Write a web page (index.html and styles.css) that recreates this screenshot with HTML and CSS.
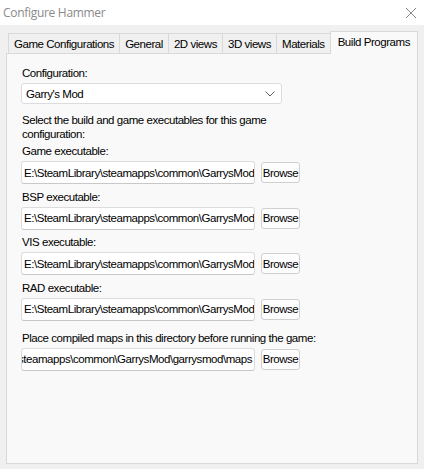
FILE: index.html
```html
<!DOCTYPE html>
<html>
<head>
<meta charset="utf-8">
<link rel="stylesheet" href="styles.css">
</head>
<body>
<div class="window">
  <div class="titlebar">
    <span class="title">Configure Hammer</span>
    <svg class="close" width="12" height="12" viewBox="0 0 12 12"><path d="M1 1 L11 11 M11 1 L1 11" stroke="#8a8a8a" stroke-width="1" fill="none"/></svg>
  </div>
  <div class="client">
    <div class="tabs">
      <div class="tab">Game Configurations</div>
      <div class="tab">General</div>
      <div class="tab">2D views</div>
      <div class="tab">3D views</div>
      <div class="tab">Materials</div>
      <div class="tab active">Build Programs</div>
    </div>
    <div class="panel">
      <div class="label">Configuration:</div>
      <div class="select">
        <span>Garry's Mod</span>
        <svg width="10" height="6" viewBox="0 0 10 6"><path d="M0.5 0.5 L5 5 L9.5 0.5" stroke="#606060" stroke-width="1" fill="none"/></svg>
      </div>
      <div class="desc">Select the build and game executables for this game configuration:</div>
      <div class="label tight">Game executable:</div>
      <div class="row"><div class="field">E:\SteamLibrary\steamapps\common\GarrysMod\hl2.exe</div><div class="btn">Browse</div></div>
      <div class="label">BSP executable:</div>
      <div class="row"><div class="field">E:\SteamLibrary\steamapps\common\GarrysMod\bin\vbsp.exe</div><div class="btn">Browse</div></div>
      <div class="label">VIS executable:</div>
      <div class="row"><div class="field">E:\SteamLibrary\steamapps\common\GarrysMod\bin\vvis.exe</div><div class="btn">Browse</div></div>
      <div class="label">RAD executable:</div>
      <div class="row"><div class="field">E:\SteamLibrary\steamapps\common\GarrysMod\bin\vrad.exe</div><div class="btn">Browse</div></div>
      <div class="label wide">Place compiled maps in this directory before running the game:</div>
      <div class="row"><div class="field end"><span>E:\SteamLibrary\steamapps\common\GarrysMod\garrysmod\maps</span></div><div class="btn">Browse</div></div>
    </div>
  </div>
</div>
</body>
</html>
```
FILE: styles.css
```css
* { box-sizing: border-box; }
html, body { margin: 0; padding: 0; }
body {
  width: 424px;
  height: 469px;
  overflow: hidden;
  font-family: "Liberation Sans", Arial, sans-serif;
  font-size: 11.5px;
  letter-spacing: -0.45px;
  color: #000;
  background: #f0f0f0;
}
.window { display: flex; flex-direction: column; height: 469px; }
.titlebar {
  height: 25px;
  background: #fff;
  display: flex;
  align-items: center;
  justify-content: space-between;
  padding: 0 7px 0 3px;
}
.title { color: #8a8a8a; font-size: 12px; font-family: "Open Sans", "Noto Sans", sans-serif; letter-spacing: -0.3px; }
.client { flex: 1; display: flex; flex-direction: column; padding: 6px 6px 5px 6px; }
.tabs { display: flex; align-items: flex-end; padding-left: 2px; height: 22px; position: relative; z-index: 1; }
.tab {
  height: 20px;
  border: 1px solid #d9d9d9;
  border-bottom: none;
  margin-right: -1px;
  background: #f0f0f0;
  padding: 0 5px;
  display: flex;
  align-items: center;
  white-space: nowrap;
}
.tab.active {
  height: 23px;
  background: #f9f9f9;
  margin-bottom: -1px;
  padding: 0 7px 3px 7px;
}
.panel {
  flex: 1;
  background: #f9f9f9;
  border: 1px solid #d9d9d9;
  padding: 12px 14px 0 14px;
  display: flex;
  flex-direction: column;
}
.label { height: 15px; line-height: 15px; margin-top: 5.5px; margin-left: 1px; white-space: nowrap; }
.label:first-child { margin-top: 0; }
.label.tight { margin-top: 3px; }
.label.wide { margin-top: 10px; }
.desc { line-height: 14px; width: 260px; margin-top: 9px; margin-left: 1px; }
.select {
  margin-top: 2px;
  width: 261px;
  height: 21px;
  background: #fff;
  border: 1px solid #dcdcdc;
  border-radius: 3px;
  display: flex;
  align-items: center;
  justify-content: space-between;
  padding: 0 6px 0 4px;
}
.row { display: flex; align-items: center; gap: 6px; margin-top: 2px; }
.field {
  width: 234px;
  height: 23px;
  background: #fff;
  border: 1px solid #dcdcdc;
  border-bottom-color: #c8c8c8;
  border-radius: 3px;
  padding: 0 2px;
  display: flex;
  align-items: center;
  white-space: nowrap;
  overflow: hidden;
  flex-shrink: 0;
}
.field.end { justify-content: flex-end; padding-right: 2px; }
.btn {
  width: 39px;
  height: 21px;
  background: #fdfdfd;
  border: 1px solid #d0d0d0;
  border-radius: 3px;
  display: flex;
  align-items: center;
  justify-content: center;
  flex-shrink: 0;
  padding: 0;
  letter-spacing: -0.5px;
}
```
